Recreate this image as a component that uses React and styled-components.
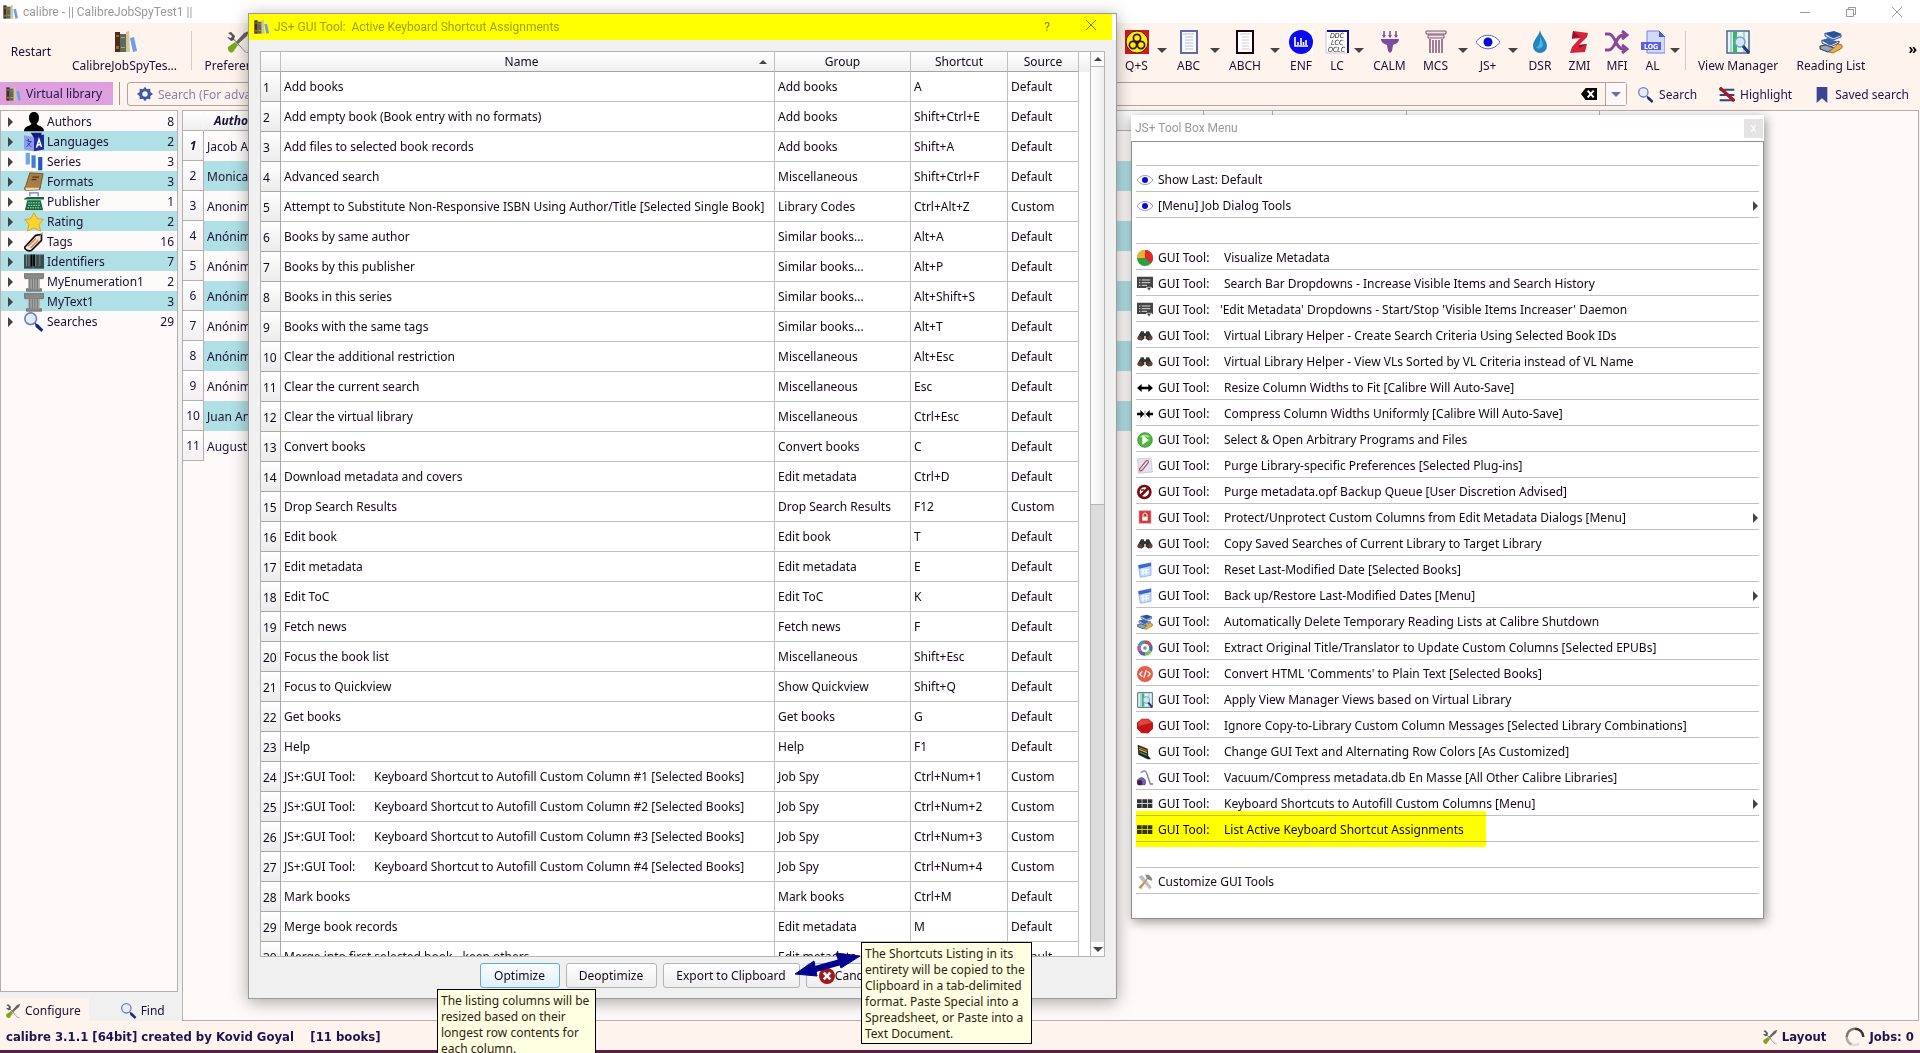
import React from 'react'
import styled, { createGlobalStyle, css } from 'styled-components'

const colors = {
    bar: '#fff3ed',
    panel: '#fffafa',
    stripe: '#b0e0e6',
    window: '#f0f0f0',
    line: '#b4b0b0',
    grid: '#c0c0c0',
    ink: '#1c1033',
    navy: '#1c1450',
    caption: '#999999',
    highlight: '#ffff00',
    tooltip: '#ffffe1',
    plum: '#dda0dd',
}

const uiFont = `'Noto Sans', sans-serif`
const captionFont = `Roboto, 'Noto Sans', sans-serif`
const statusFont = `'DejaVu Sans Condensed', 'Noto Sans', sans-serif`

const GlobalStyle = createGlobalStyle`
    * {
        box-sizing: border-box;
    }
    body {
        margin: 0;
        overflow: hidden;
    }
    button, input {
        font: inherit;
        color: inherit;
        margin: 0;
        padding: 0;
        border: 0;
        background: none;
    }
`

/* ---------- icons ---------- */

const IconBox = styled.svg`
    display: block;
    flex: none;
    width: ${(props) => props.$size}px;
    height: ${(props) => props.$size}px;
`

const drawings = {
    books: (
        <>
            <path d="M2 2h5v20H2z" fill="#4a2c1a" />
            <path d="M3 5h3v2H3zM3 16h3v3H3z" fill="#a0602a" />
            <path d="M7 4h6v18H7z" fill="#5c6a5e" />
            <path d="M8 7h4v1H8zM8 17h4v1H8z" fill="#9aa898" />
            <path d="M13 2l3-1 1 21h-4z" fill="#d8c48e" />
            <path d="M17 8l4-1 3 14-4 1z" fill="#6f9cf0" />
        </>
    ),
    tools: (
        <>
            <path d="M2 3l3-1 4 4-1 3 10 11 3 1 1 2-3-1L8 10l-3 1-4-4 4 1 1-2z" fill="#555" />
            <path d="M18 3l5-2-2 5-9 8-2-2z" fill="#666" />
            <path d="M2 17l7-5 3 3-5 7c-3 2-6-2-5-5z" fill="#7ea61c" />
            <path d="M15 15l6 7" stroke="#eee" strokeWidth="2" />
        </>
    ),
    biohazard: (
        <>
            <path d="M0 0h24v24H0z" fill="#d8151b" />
            <circle cx="12" cy="12" r="11" fill="#ffee12" stroke="#4a1a10" />
            <g fill="none" stroke="#3b1018" strokeWidth="1.700">
                <circle cx="12" cy="8" r="3.600" />
                <circle cx="8" cy="15" r="3.600" />
                <circle cx="16" cy="15" r="3.600" />
            </g>
            <circle cx="12" cy="12.500" r="1.600" fill="#3b1018" />
        </>
    ),
    abc: (
        <>
            <path d="M4 1h16v22H4z" fill="#f8faff" stroke="#6068b0" strokeWidth="2" />
            <path d="M6 4h11M8 7h8M8 10h8M8 13h8M8 16h8M8 19h8" stroke="#b8c4cc" />
        </>
    ),
    abch: (
        <>
            <path d="M4 1h16v22H4z" fill="#fff" stroke="#1a0010" strokeWidth="2" />
            <path d="M7 4h10M9 7h7M9 10h7M9 13h7M9 16h7M9 19h7" stroke="#ccc" />
        </>
    ),
    enf: (
        <>
            <path d="M0 0h24v24H0z" fill="#fff" />
            <circle cx="12" cy="12" r="12" fill="#0b0bf0" />
            <path d="M6 7v9h13M9 15v-3M12 15V8M14.500 15v-3M17 15v-5" stroke="#fff" strokeWidth="1.600" fill="none" />
        </>
    ),
    lc: (
        <>
            <path d="M1 1h22v22H1z" fill="#fff" stroke="#c4c4dc" />
            <path d="M2 1h21v22" stroke="#10108c" strokeWidth="2" fill="none" />
            <g fontSize="7" fontStyle="italic" fontFamily="DejaVu Sans Condensed" fill="#222">
                <text x="5" y="8">DDC</text>
                <text x="6" y="15">LCC</text>
                <text x="3" y="22">OCLC</text>
            </g>
        </>
    ),
    funnel: (
        <>
            <path d="M6 1v6M12 1v6M18 1v6" stroke="#7a4e9c" strokeWidth="1.5" />
            <path d="M4 5h4L6 8zM10 5h4l-2 3zM16 5h4l-2 3zM3 9h18c0 4-4 5-6 6l-1 6-2 2-2-2-1-6c-2-1-6-2-6-6z" fill="#7a4e9c" />
        </>
    ),
    column: (
        <>
            <path d="M2 1h20v3H2zM4 5h16v3H4z" fill="#f4e0ea" stroke="#7b5a70" />
            <path d="M6 9v14M9 10v13M12 10v13M15 10v13M18 9v14" stroke="#8a5f80" strokeWidth="1.6" />
        </>
    ),
    eye: (
        <>
            <path d="M0 12c6-9 18-9 24 0-6 9-18 9-24 0z" fill="#fff" stroke="#5a66b8" />
            <circle cx="12" cy="12" r="4.500" fill="#0b0bd8" />
        </>
    ),
    drop: (
        <>
            <path d="M12 0c1 6 7 10 7 16a7 7 0 0 1-14 0c0-6 6-10 7-16z" fill="#2684bd" />
            <path d="M12 6c1 4 3 6 3 9a4 4 0 0 1-7 2c4 0 4-6 4-11z" fill="#52b0e0" />
        </>
    ),
    zotero: (
        <>
            <path d="M5 1l15 2-1 4-8 8 8-1-2 8-15 1 2-6 8-9-8 1z" fill="#d3243c" />
            <path d="M5 1l7 6-8 1zM11 15l8-1-8 4z" fill="#8e1228" />
        </>
    ),
    shuffle: (
        <path
            d="M0 4h4c6 0 7 15 14 15h2M0 20h4c6 0 7-15 14-15h2M17 1l5 4-5 4M17 15l5 4-5 4"
            fill="none"
            stroke="#87479b"
            strokeWidth="3"
        />
    ),
    log: (
        <>
            <path d="M6 1h12l6 6v16H6z" fill="#cfdcfa" stroke="#6f83e8" />
            <path d="M18 1v6h6z" fill="#4a56d8" />
            <path d="M0 12h20v8H0z" fill="#5a5ee8" />
            <text x="3" y="19" fontSize="7" fontWeight="bold" fontFamily="DejaVu Sans Condensed" fill="#fff">LOG</text>
        </>
    ),
    views: (
        <>
            <path d="M1 1h22v22H1z" fill="#e8f4fa" stroke="#456a86" strokeWidth="1.500" />
            <path d="M5 2v20M18 2v20" stroke="#7aa8c0" />
            <path d="M7 2h4v20H7z" fill="#2fbe58" />
            <circle cx="14" cy="12" r="5" fill="#cfe6f6" stroke="#7b9fc8" strokeWidth="1.500" />
            <path d="M17 16l6 7" stroke="#27347a" strokeWidth="3" />
        </>
    ),
    reading: (
        <>
            <path d="M6 3l9-2 8 3-9 4z" fill="#2b5298" />
            <path d="M6 3v3l8 4 8-3V5l-8 3z" fill="#d8e6f4" stroke="#2b5298" />
            <path d="M3 10l6-2 10 4-8 3z" fill="#3a66ac" />
            <path d="M3 10v3l8 4 9-4v-2l-9 4z" fill="#eef" stroke="#2b4888" />
            <path d="M1 16l6-1 8 3-6 4-8-3z" fill="#8fa8c0" stroke="#334" />
            <path d="M10 22l9-8 4 1v3l-9 5z" fill="#e8b052" stroke="#a87020" />
        </>
    ),
    gear: (
        <>
            <path d="M12 1l3 4 5-1 0 5 4 3-4 3 0 5-5-1-3 4-3-4-5 1 0-5-4-3 4-3 0-5 5 1z" fill="#3b5aa8" />
            <circle cx="12" cy="12" r="4" fill="#fff3ed" />
        </>
    ),
    magnifier: (
        <>
            <circle cx="8" cy="8" r="7" fill="#e4eefa" stroke="#6683c0" strokeWidth="2" />
            <path d="M13 13l4 2 6 6-2 3-7-6z" fill="#1c2880" />
        </>
    ),
    highlightOff: (
        <>
            <path d="M1 4h22M1 12h22M1 20h22" stroke="#264d80" strokeWidth="3" />
            <path d="M1 1l22 20" stroke="#a81820" strokeWidth="5" />
        </>
    ),
    bookmark: <path d="M4 0h16v24l-8-7-8 7z" fill="#3a4594" />,
    clear: (
        <>
            <path d="M7 3h17v18H7l-7-9z" fill="#000" />
            <path d="M10 7l9 10M19 7l-9 10" stroke="#fff" strokeWidth="3" />
        </>
    ),
    person: (
        <path d="M12 0c4 0 6 3 6 7s-1 5-3 7c1 3 9 2 9 9H0c0-7 8-6 9-9-2-2-3-3-3-7s2-7 6-7z" fill="#000" />
    ),
    language: (
        <>
            <path d="M0 4l12 2v17L0 21z" fill="#8f9cf2" />
            <path d="M12 6l12-3v18l-12 2z" fill="#1b2ba0" />
            <path d="M8 1h13v4l-9 2z" fill="#101c78" />
            <path d="M3 10l6 2M5 8l1 4M9 11l-6 7M4 13l5 5" stroke="#2a3788" />
            <path d="M15 19l3-10 3 9M16 16l4-1" stroke="#fff" strokeWidth="1.800" fill="none" />
        </>
    ),
    series: (
        <>
            <path d="M2 1h5v14H2z" fill="#6aa6ec" />
            <path d="M9 4h5v15H9z" fill="#3c7fdc" />
            <path d="M17 6h5v16h-5z" fill="#1e5cc2" />
        </>
    ),
    book: (
        <>
            <path d="M7 1l16 1-4 19-17 1c-2-1-2-3 0-5z" fill="#a87c44" stroke="#6d4d24" />
            <path d="M2 19l16 0 0 2-16 1z" fill="#eadbb8" />
            <path d="M10 6l8 0M9 9l6 0" stroke="#4c3414" strokeWidth="1.500" />
        </>
    ),
    typewriter: (
        <>
            <path d="M7 5V1h10v4" fill="none" stroke="#7476c0" strokeWidth="1.500" />
            <path d="M0 8l4-2h16l4 0v3H0zM4 10h16l3 12H1z" fill="#146a3e" />
            <path d="M5 13h14M5 16h14M4 19h16" stroke="#b9e0c8" strokeWidth="1.200" strokeDasharray="2 1" />
        </>
    ),
    star: <path d="M12 1l4 7 7 1-5 6 2 8-8-4-8 4 2-8-5-6 7-1z" fill="#ffd42e" stroke="#d59a18" />,
    tag: (
        <>
            <path d="M1 18L14 4l7-1 0 7L9 22c-3 2-9-1-8-4z" fill="#f2ded0" stroke="#111" strokeWidth="2" />
            <path d="M5 17l9-9M8 19l9-9" stroke="#d07848" strokeWidth="1.500" />
            <path d="M19 5l4-5" stroke="#999" />
        </>
    ),
    barcode: (
        <>
            <path d="M0 3h24v17H0z" fill="#3b4a4c" />
            <path d="M3 3v14M6 3v14M11 3v17M14 3v14M19 3v14" stroke="#7d9294" />
            <path d="M9 3v14M12 3v14" stroke="#000" strokeWidth="2" />
        </>
    ),
    pillar: (
        <>
            <path d="M0 2h24l-1 6H1zM3 20h18v3H3z" fill="#8a8a8a" stroke="#666" />
            <path d="M5 8h14v12H5z" fill="#a8a8a8" />
            <path d="M7 8v12M10 8v12M13 8v12M16 8v12" stroke="#666" />
        </>
    ),
    pie: (
        <>
            <circle cx="12" cy="12" r="12" fill="#2f9e41" />
            <path d="M12 12V0a12 12 0 0 1 9 20z" fill="#e8262a" />
            <path d="M12 12H0A12 12 0 0 1 12 0z" fill="#f0b030" />
        </>
    ),
    dropdown: (
        <>
            <path d="M0 1h24v17h-3l-3 4-3-4H0z" fill="#444" />
            <path d="M3 6h2M7 6h13M3 10h2M7 10h13M3 14h2M7 14h8" stroke="#ddd" strokeWidth="1.500" />
            <path d="M14 17h8l-4 5z" fill="#444" stroke="#fff" />
        </>
    ),
    binoculars: (
        <>
            <path d="M6 5h4l1 3h2l1-3h4l5 9-5 5-5-3v-4h-2v4l-5 3-5-5z" fill="#333" />
            <circle cx="4" cy="15" r="3.500" fill="#6b3f2c" />
            <circle cx="20" cy="15" r="3.500" fill="#6b3f2c" />
            <path d="M2 23h20" stroke="#e4e4e4" />
        </>
    ),
    widen: <path d="M0 12l7-6v4h10V6l7 6-7 6v-4H7v4z" fill="#000" />,
    narrow: (
        <>
            <path d="M0 10h5V6l6 6-6 6v-4H0zM24 10h-5V6l-6 6 6 6v-4h5z" fill="#000" />
            <path d="M12 7v10" stroke="#666" />
        </>
    ),
    play: (
        <>
            <circle cx="12" cy="12" r="11" fill="#4cb83c" stroke="#2a7a28" />
            <path d="M4 8a9 8 0 0 1 16 0z" fill="#a4e08c" />
            <path d="M8 5l10 7-10 7z" fill="#fff" />
        </>
    ),
    plug: (
        <>
            <path d="M1 1h20l2 20-21 2z" fill="#e4e2f0" stroke="#bbb8cc" />
            <path d="M5 15l8-10c3-3 6 0 3 3l-8 10c-3 3-6 0-3-3z" fill="none" stroke="#a85058" strokeWidth="1.800" />
        </>
    ),
    forbid: (
        <>
            <circle cx="11" cy="12" r="9" fill="#fff" stroke="#7a0c10" strokeWidth="4" />
            <path d="M5 18L17 6" stroke="#7a0c10" strokeWidth="4" />
            <path d="M6 9l5 0" stroke="#222" strokeWidth="2" />
        </>
    ),
    lock: (
        <>
            <path d="M3 1h18v19H3z" fill="#d03a3e" stroke="#e8a0a0" />
            <path d="M8 10h8v6H8z" fill="#fff" />
            <path d="M9 10V7c0-3 6-3 6 0v3" fill="none" stroke="#fff" strokeWidth="1.500" />
        </>
    ),
    calendar: (
        <>
            <path d="M2 5l19-4 0 19-16 3z" fill="#c4dafa" stroke="#7aa0e0" />
            <path d="M2 5l19-4v5L3 10z" fill="#3a68c8" />
            <path d="M6 13l12-2M6 17l12-2M9 10v10M14 10v9" stroke="#fff" strokeWidth="1.500" />
        </>
    ),
    wheel: (
        <g fill="none" strokeWidth="5">
            <path d="M12 3a9 9 0 0 1 8 5" stroke="#d04a4a" />
            <path d="M20 8a9 9 0 0 1 0 8" stroke="#3a68c0" />
            <path d="M20 16a9 9 0 0 1-8 5" stroke="#7ac05a" />
            <path d="M12 21a9 9 0 0 1-8-5" stroke="#5a5ac0" />
            <path d="M4 16a9 9 0 0 1 0-8" stroke="#c050a0" />
            <path d="M4 8a9 9 0 0 1 8-5" stroke="#38a0b0" />
            <circle cx="12" cy="12" r="3" fill="#888" stroke="#ddd" strokeWidth="1" />
        </g>
    ),
    html: (
        <>
            <circle cx="12" cy="12" r="12" fill="#e0604c" />
            <path d="M8 8l-4 4 4 4M16 8l4 4-4 4M14 6l-4 12" fill="none" stroke="#fff" strokeWidth="1.800" />
        </>
    ),
    stop: (
        <>
            <path d="M7 1h10l7 6v9l-7 7H7l-7-7V7z" fill="#c41414" />
            <path d="M7 2h9l6 5-20 5V7z" fill="#e0453c" />
        </>
    ),
    palette: (
        <>
            <path d="M1 1l15 6 1 11 4 5-5 0-14-7z" fill="#222" />
            <path d="M3 4l12 5v2L3 6z" fill="#d8782a" />
            <path d="M3 7l12 5v2L3 9z" fill="#e0c828" />
            <path d="M3 11l12 5v2L4 13z" fill="#2aa080" />
        </>
    ),
    vacuum: (
        <>
            <path d="M6 4c5-5 8-2 9 2l5 15h4" fill="none" stroke="#7c78b0" strokeWidth="2" />
            <path d="M0 17c2-7 12-8 13 1l-1 4H4z" fill="#6b62cc" stroke="#3c3478" />
            <circle cx="4" cy="19" r="4" fill="#5c1830" />
        </>
    ),
    keys: (
        <path d="M0 5h7v6H0zM8 5h7v6H8zM16 5h7v6h-7zM0 12h7v6H0zM8 12h7v6H8zM16 12h7v6h-7z" fill="#333" />
    ),
    hammer: (
        <>
            <path d="M2 4l6-2 14 18-3 3L6 9z" fill="#b8bcc4" />
            <path d="M14 2l7 3 1 5-6-2L6 23l-4-3L14 8z" fill="#c09a58" />
            <path d="M12 1l6 0 5 6-1 3-6-3z" fill="#888" />
        </>
    ),
    cancel: (
        <>
            <circle cx="12" cy="12" r="12" fill="#a01818" />
            <path d="M7 7l10 10M17 7L7 17" stroke="#fff" strokeWidth="4" />
        </>
    ),
    spinner: (
        <g fill="none" strokeWidth="3">
            <path d="M8 21a10 10 0 0 1-6-9" stroke="#aaa" />
            <path d="M2 12A10 10 0 0 1 12 2" stroke="#777" />
            <path d="M12 2a10 10 0 0 1 10 10" stroke="#333" />
            <path d="M8 21a10 10 0 0 0 9-1" stroke="#ddd" />
        </g>
    ),
}

function Icon({ name, size = 24 }) {
    return (
        <IconBox viewBox="0 0 24 24" $size={size} aria-hidden="true">
            {drawings[name]}
        </IconBox>
    )
}

const Triangle = styled.span`
    flex: none;
    width: 0;
    height: 0;
    border: 5px solid transparent;
    ${(props) =>
        props.$to === 'down' &&
        css`
            border-top-color: ${props.$color || '#444'};
            border-bottom: 0;
        `}
    ${(props) =>
        props.$to === 'up' &&
        css`
            border-width: 4px;
            border-bottom-color: #444;
            border-top: 0;
        `}
    ${(props) =>
        props.$to === 'right' &&
        css`
            border-left-color: #444;
            border-right: 0;
        `}
`

/* ---------- main window ---------- */

const Desktop = styled.div`
    position: relative;
    display: flex;
    flex-direction: column;
    height: 100vh;
    overflow: hidden;
    background: ${colors.bar};
    font-family: ${uiFont};
    font-size: 12px;
    line-height: 16px;
    color: ${colors.ink};
    white-space: pre;
`

const TitleBar = styled.header`
    flex: none;
    display: flex;
    align-items: center;
    height: 23px;
    padding-left: 2px;
    gap: 5px;
    background: #fff;
    color: ${colors.caption};
    font-family: ${captionFont};
`

const WindowButtons = styled.div`
    display: flex;
    margin-left: auto;
`

const WindowButton = styled.button`
    display: flex;
    justify-content: center;
    width: ${(props) => props.$width || 46}px;
    color: ${colors.caption};

    svg {
        width: 12px;
        height: 12px;
        fill: none;
        stroke: currentColor;
    }
`

const ToolBar = styled.nav`
    flex: none;
    display: flex;
    justify-content: space-between;
    height: 59px;
`

const ToolGroup = styled.div`
    display: flex;
`

const ToolButton = styled.button`
    display: flex;
    flex-direction: column;
    align-items: center;
    justify-content: center;
    gap: 4px;
    width: ${(props) => props.$width}px;
    height: 57px;
`

const DropButton = styled.button`
    display: flex;
    align-items: center;
    justify-content: center;
    width: 12px;
    height: 54px;
`

const ToolDivider = styled.span`
    width: 1px;
    height: 39px;
    margin: 8px 4px;
    background: #d0cccc;
`

const More = styled.button`
    width: 44px;
    height: 52px;
    padding-right: 3px;
    text-align: right;
    font-weight: bold;
    font-size: 14px;
    color: #000;
`

const SearchRow = styled.div`
    flex: none;
    display: flex;
    height: 28px;
    color: ${colors.navy};
`

const VirtualLibrary = styled.button`
    display: flex;
    align-items: center;
    gap: 5px;
    width: 113px;
    height: 23px;
    padding: 1px 0 0 5px;
    background: ${colors.plum};
`

const Splitter = styled.span`
    width: 1px;
    height: 23px;
    margin: 0 7px 0 6px;
    background: #999;
`

const SearchBox = styled.div`
    flex: 1;
    display: flex;
    align-items: center;
    height: 24px;
    padding-left: 9px;
    gap: 5px;
    border: 1px solid #aaa4a4;
    border-radius: 3px;

    input {
        flex: 1;
        min-width: 0;
        padding-top: 1px;
        outline: 0;
    }
    input::placeholder {
        color: #8c80a8;
        opacity: 1;
    }
`

const SearchDrop = styled.button`
    display: flex;
    align-items: center;
    justify-content: center;
    width: 21px;
    height: 22px;
    margin-left: 3px;
    border-left: 1px solid #aaa4a4;
    background: #fff8f6;
`

const SearchAction = styled.button`
    display: flex;
    align-items: center;
    gap: 5px;
    height: 24px;
    padding-top: 1px;
    margin-left: ${(props) => props.$space}px;

    &:last-child {
        margin-right: 11px;
    }
`

const Body = styled.main`
    flex: 1;
    display: flex;
    min-height: 0;
    background: ${colors.window};
`

const SideBar = styled.aside`
    flex: none;
    display: flex;
    flex-direction: column;
    width: 178px;
    margin-right: 4px;
`

const Tree = styled.ul`
    flex: 1;
    margin: 0 0 6px;
    padding: 0;
    list-style: none;
    border: 1px solid ${colors.line};
    background: ${colors.panel};
`

const TreeRow = styled.li`
    display: flex;
    align-items: center;
    height: 20px;
    padding: 1px 3px 0 7px;
    gap: 3px;

    &:nth-child(even) {
        background: ${colors.stripe};
    }
    ${Triangle} {
        margin-right: 8px;
    }
`

const Count = styled.span`
    margin-left: auto;
`

const SideTabs = styled.div`
    display: flex;
    height: 23px;
`

const SideTab = styled.button`
    display: flex;
    align-items: center;
    gap: 4px;
    width: 91px;
    padding: 2px 0 0 ${(props) => (props.$active ? 5 : 32)}px;
    background: ${(props) => (props.$active ? colors.bar : 'transparent')};
`

const Library = styled.section`
    flex: 1;
    margin-right: 1px;
    border: 1px solid ${colors.line};
    background: ${colors.panel};
    overflow: hidden;
`

const BookTable = styled.table`
    width: 1417px;
    table-layout: fixed;
    border-collapse: separate;
    border-spacing: 0;

    th, td {
        padding: 1px 3px 0;
        text-align: left;
        font-weight: normal;
    }
    thead th {
        height: 20px;
        padding-left: 10px;
        font-weight: bold;
        font-style: italic;
        border: solid ${colors.line};
        border-width: 0 1px 1px 0;
        background: linear-gradient(#fff, #efefef);
    }
    thead th:first-child {
        border-right-color: #f8f8f8;
    }
    tbody th {
        height: 30px;
        padding: 1px 0 0;
        text-align: center;
        border: solid ${colors.line};
        border-width: 0 1px 1px 0;
        background: linear-gradient(#fff, #f2f0f0);
    }
    tbody tr:first-child th {
        font-weight: bold;
        font-style: italic;
    }
    tbody tr:nth-child(even) td {
        background: ${colors.stripe};
    }
`

const StatusBar = styled.footer`
    flex: none;
    display: flex;
    align-items: center;
    height: 29px;
    padding: 2px 6px 0;
    font-family: ${statusFont};
    font-size: 13px;
    font-weight: bold;
    color: ${colors.navy};
`

const StatusButton = styled.button`
    display: flex;
    align-items: center;
    gap: 4px;
    margin-left: ${(props) => (props.$push ? 'auto' : '19px')};
`

const TaskBarEdge = styled.div`
    flex: none;
    height: 3px;
    background: #5a2144;
`

/* ---------- shortcuts dialog ---------- */

const Dialog = styled.section`
    position: absolute;
    top: 13px;
    bottom: 54px;
    left: 248px;
    display: flex;
    flex-direction: column;
    width: 869px;
    border: 1px solid #9a9a9a;
    background: ${colors.window};
    box-shadow: 0 3px 16px rgba(0, 0, 0, 0.35);
    color: #120818;
`

const DialogTitle = styled.header`
    flex: none;
    display: flex;
    align-items: center;
    gap: 5px;
    height: 26px;
    padding-left: 4px;
    border-right: 4px solid #fff;
    background: ${colors.highlight};
    color: #a0a000;
    font-family: ${captionFont};

    button {
        color: #808000;
    }
`

const Grid = styled.div`
    flex: 1;
    display: flex;
    min-height: 0;
    margin: 11px 11px 6px;
    border: 1px solid #b4b4b4;
    background: #fff;
`

const GridView = styled.div`
    flex: 1;
    overflow: hidden;
    background: linear-gradient(#fff, #efefef) 0 0 / 100% 20px no-repeat;
`

const ShortcutTable = styled.table`
    width: 818px;
    table-layout: fixed;
    border-collapse: separate;
    border-spacing: 0;

    th, td {
        padding: 0 3px;
        text-align: left;
        font-weight: normal;
        border: solid ${colors.grid};
        border-width: 0 1px 1px 0;
    }
    thead th {
        height: 20px;
        padding-top: 1px;
        text-align: center;
        border-bottom-color: #a4a4a4;
    }
    tbody th {
        height: 30px;
        padding: 2px 0 0 2px;
        border-color: #a8a8a8;
        background: linear-gradient(#fff, #ececec);
    }
`

const SortHead = styled.span`
    display: grid;
    grid-template-columns: 1fr 12px;
    align-items: center;
`

const ScrollBar = styled.div`
    display: flex;
    flex-direction: column;
    width: 14px;
    border-left: 1px solid #b4b4b4;
    background: #dcdcdc;
`

const ScrollButton = styled.button`
    display: flex;
    align-items: center;
    justify-content: center;
    height: 14px;
    background: #fafafa;
`

const ScrollHandle = styled.div`
    flex: 1;
    border: solid #b4b4b4;
    border-width: 1px 0;
    background: linear-gradient(to right, #fff, #ededed);
`

const ScrollTrack = styled.div`
    flex: 1;
`

const DialogButtons = styled.footer`
    flex: none;
    display: flex;
    justify-content: center;
    gap: 6px;
    height: 35px;
`

const PushButton = styled.button`
    display: flex;
    align-items: center;
    justify-content: center;
    width: ${(props) => props.$width}px;
    height: 25px;
    border: 1px solid ${(props) => (props.$default ? '#5cacd8' : '#b4b4b4')};
    border-radius: 3px;
    background: ${(props) =>
        props.$default ? 'linear-gradient(#fafdff, #e0f0f8)' : 'linear-gradient(#fefefe, #eeeeee)'};
`

/* ---------- tool box menu ---------- */

const ToolBox = styled.section`
    position: absolute;
    top: 115px;
    left: 1131px;
    width: 633px;
    background: #fff;
    box-shadow: 2px 3px 10px rgba(0, 0, 0, 0.4);
    color: #120818;
`

const ToolBoxTitle = styled.header`
    display: flex;
    align-items: center;
    justify-content: space-between;
    height: 26px;
    padding: 0 1px 0 4px;
    color: ${colors.caption};
    font-family: ${captionFont};

    button {
        width: 19px;
        height: 19px;
        line-height: 16px;
        background: #e4e4e4;
        color: #fff;
    }
`

const MenuList = styled.ul`
    margin: 0;
    padding: 0 4px 24px;
    list-style: none;
    border: 1px solid #909090;
`

const MenuRow = styled.li`
    position: relative;
    height: ${(props) => (props.$first ? 24 : 26)}px;
    border-bottom: 1px solid ${colors.grid};
`

const MenuButton = styled.button`
    display: flex;
    align-items: center;
    gap: 5px;
    width: 100%;
    height: 27px;
    padding: 0 1px;

    ${Triangle} {
        margin-left: auto;
    }
`

const Lead = styled.span`
    display: inline-block;
    width: ${(props) => (props.$tight ? 62 : 66)}px;
    text-align: left;
`

const Marker = styled.span`
    position: absolute;
    top: -5px;
    left: 0;
    width: 350px;
    height: 36px;
    background: ${colors.highlight};
    mix-blend-mode: multiply;
    pointer-events: none;
`

const Tooltip = styled.div`
    position: absolute;
    top: ${(props) => props.$top}px;
    left: ${(props) => props.$left}px;
    width: ${(props) => props.$width}px;
    padding: 3px 3px 1px;
    border: 1px solid #000;
    background: ${colors.tooltip};
    color: #2c1c14;
`

const Pointer = styled.svg`
    position: absolute;
    top: 952px;
    left: 794px;
    width: 68px;
    height: 26px;
    fill: #00008c;
    stroke: #00008c;
`

const tools = [
    { icon: 'biohazard', label: 'Q+S', width: 39, drop: true },
    { icon: 'abc', label: 'ABC', width: 41, drop: true },
    { icon: 'abch', label: 'ABCH', width: 48, drop: true },
    { icon: 'enf', label: 'ENF', width: 40 },
    { icon: 'lc', label: 'LC', width: 32, drop: true },
    { icon: 'funnel', label: 'CALM', width: 49 },
    { icon: 'column', label: 'MCS', width: 43, drop: true },
    { icon: 'eye', label: 'JS+', width: 38, drop: true },
    { icon: 'drop', label: 'DSR', width: 42 },
    { icon: 'zotero', label: 'ZMI', width: 37 },
    { icon: 'shuffle', label: 'MFI', width: 38 },
    { icon: 'log', label: 'AL', width: 33, drop: true },
]

const categories = [
    ['person', 'Authors', 8],
    ['language', 'Languages', 2],
    ['series', 'Series', 3],
    ['book', 'Formats', 3],
    ['typewriter', 'Publisher', 1],
    ['star', 'Rating', 2],
    ['tag', 'Tags', 16],
    ['barcode', 'Identifiers', 7],
    ['pillar', 'MyEnumeration1', 2],
    ['pillar', 'MyText1', 3],
    ['magnifier', 'Searches', 29],
]

const authors = [
    'Jacob A', 'Monica', 'Anonim', 'Anónim', 'Anónim', 'Anónim',
    'Anónim', 'Anónim', 'Anónim', 'Juan An', 'August',
]

const shortcuts = [
    ['Add books', 'Add books', 'A', 'Default'],
    ['Add empty book (Book entry with no formats)', 'Add books', 'Shift+Ctrl+E', 'Default'],
    ['Add files to selected book records', 'Add books', 'Shift+A', 'Default'],
    ['Advanced search', 'Miscellaneous', 'Shift+Ctrl+F', 'Default'],
    ['Attempt to Substitute Non-Responsive ISBN Using Author/Title [Selected Single Book]', 'Library Codes', 'Ctrl+Alt+Z', 'Custom'],
    ['Books by same author', 'Similar books...', 'Alt+A', 'Default'],
    ['Books by this publisher', 'Similar books...', 'Alt+P', 'Default'],
    ['Books in this series', 'Similar books...', 'Alt+Shift+S', 'Default'],
    ['Books with the same tags', 'Similar books...', 'Alt+T', 'Default'],
    ['Clear the additional restriction', 'Miscellaneous', 'Alt+Esc', 'Default'],
    ['Clear the current search', 'Miscellaneous', 'Esc', 'Default'],
    ['Clear the virtual library', 'Miscellaneous', 'Ctrl+Esc', 'Default'],
    ['Convert books', 'Convert books', 'C', 'Default'],
    ['Download metadata and covers', 'Edit metadata', 'Ctrl+D', 'Default'],
    ['Drop Search Results', 'Drop Search Results', 'F12', 'Custom'],
    ['Edit book', 'Edit book', 'T', 'Default'],
    ['Edit metadata', 'Edit metadata', 'E', 'Default'],
    ['Edit ToC', 'Edit ToC', 'K', 'Default'],
    ['Fetch news', 'Fetch news', 'F', 'Default'],
    ['Focus the book list', 'Miscellaneous', 'Shift+Esc', 'Default'],
    ['Focus to Quickview', 'Show Quickview', 'Shift+Q', 'Default'],
    ['Get books', 'Get books', 'G', 'Default'],
    ['Help', 'Help', 'F1', 'Default'],
    ['JS+:GUI Tool:      Keyboard Shortcut to Autofill Custom Column #1 [Selected Books]', 'Job Spy', 'Ctrl+Num+1', 'Custom'],
    ['JS+:GUI Tool:      Keyboard Shortcut to Autofill Custom Column #2 [Selected Books]', 'Job Spy', 'Ctrl+Num+2', 'Custom'],
    ['JS+:GUI Tool:      Keyboard Shortcut to Autofill Custom Column #3 [Selected Books]', 'Job Spy', 'Ctrl+Num+3', 'Custom'],
    ['JS+:GUI Tool:      Keyboard Shortcut to Autofill Custom Column #4 [Selected Books]', 'Job Spy', 'Ctrl+Num+4', 'Custom'],
    ['Mark books', 'Mark books', 'Ctrl+M', 'Default'],
    ['Merge book records', 'Edit metadata', 'M', 'Default'],
    ['Merge into first selected book - keep others', 'Edit metadata', 'Alt+M', 'Default'],
]

const guiTools = [
    ['pie', 'Visualize Metadata'],
    ['dropdown', 'Search Bar Dropdowns - Increase Visible Items and Search History'],
    ['dropdown', "'Edit Metadata' Dropdowns - Start/Stop 'Visible Items Increaser' Daemon"],
    ['binoculars', 'Virtual Library Helper - Create Search Criteria Using Selected Book IDs'],
    ['binoculars', 'Virtual Library Helper - View VLs Sorted by VL Criteria instead of VL Name'],
    ['widen', 'Resize Column Widths to Fit [Calibre Will Auto-Save]'],
    ['narrow', 'Compress Column Widths Uniformly [Calibre Will Auto-Save]'],
    ['play', 'Select & Open Arbitrary Programs and Files'],
    ['plug', 'Purge Library-specific Preferences [Selected Plug-ins]'],
    ['forbid', 'Purge metadata.opf Backup Queue [User Discretion Advised]'],
    ['lock', 'Protect/Unprotect Custom Columns from Edit Metadata Dialogs [Menu]', true],
    ['binoculars', 'Copy Saved Searches of Current Library to Target Library'],
    ['calendar', 'Reset Last-Modified Date [Selected Books]'],
    ['calendar', 'Back up/Restore Last-Modified Dates [Menu]', true],
    ['reading', 'Automatically Delete Temporary Reading Lists at Calibre Shutdown'],
    ['wheel', 'Extract Original Title/Translator to Update Custom Columns [Selected EPUBs]'],
    ['html', "Convert HTML 'Comments' to Plain Text [Selected Books]"],
    ['views', 'Apply View Manager Views based on Virtual Library'],
    ['stop', 'Ignore Copy-to-Library Custom Column Messages [Selected Library Combinations]'],
    ['palette', 'Change GUI Text and Alternating Row Colors [As Customized]'],
    ['vacuum', 'Vacuum/Compress metadata.db En Masse [All Other Calibre Libraries]'],
    ['keys', 'Keyboard Shortcuts to Autofill Custom Columns [Menu]', true],
    ['keys', 'List Active Keyboard Shortcut Assignments'],
]

function MenuItem({ icon, lead, label, submenu, marked }) {
    return (
        <MenuRow>
            <MenuButton>
                <Icon name={icon} size={16} />
                <span>
                    {lead && <Lead $tight={label.startsWith("'")}>GUI Tool:</Lead>}
                    {label}
                </span>
                {submenu && <Triangle $to="right" />}
            </MenuButton>
            {marked && <Marker />}
        </MenuRow>
    )
}

function MainToolBar() {
    return (
        <ToolBar>
            <ToolGroup>
                <ToolButton $width={62}>Restart</ToolButton>
                <ToolButton $width={125}>
                    <Icon name="books" />
                    CalibreJobSpyTes...
                </ToolButton>
                <ToolDivider />
                <ToolButton $width={84}>
                    <Icon name="tools" />
                    Preferences
                </ToolButton>
            </ToolGroup>
            <ToolGroup>
                {tools.map((tool) => (
                    <React.Fragment key={tool.label}>
                        <ToolButton $width={tool.width}>
                            <Icon name={tool.icon} />
                            {tool.label}
                        </ToolButton>
                        {tool.drop && (
                            <DropButton aria-label={`${tool.label} menu`}>
                                <Triangle $to="down" />
                            </DropButton>
                        )}
                    </React.Fragment>
                ))}
                <ToolDivider />
                <ToolButton $width={96}>
                    <Icon name="views" />
                    View Manager
                </ToolButton>
                <ToolButton $width={90}>
                    <Icon name="reading" />
                    Reading List
                </ToolButton>
                <More aria-label="More tools">»</More>
            </ToolGroup>
        </ToolBar>
    )
}

function MainSearch() {
    return (
        <SearchRow>
            <VirtualLibrary>
                <Icon name="books" size={16} />
                Virtual library
            </VirtualLibrary>
            <Splitter />
            <SearchBox>
                <Icon name="gear" size={16} />
                <input aria-label="Search" placeholder="Search (For advanced search click the gear icon to the left)" />
                <Icon name="clear" size={16} />
                <SearchDrop aria-label="Search history">
                    <Triangle $to="down" $color="#6a70a8" />
                </SearchDrop>
            </SearchBox>
            <SearchAction $space={11}>
                <Icon name="magnifier" size={16} />
                Search
            </SearchAction>
            <SearchAction $space={22}>
                <Icon name="highlightOff" size={16} />
                Highlight
            </SearchAction>
            <SearchAction $space={22}>
                <Icon name="bookmark" size={16} />
                Saved search
            </SearchAction>
        </SearchRow>
    )
}

function SidePanel() {
    return (
        <SideBar>
            <Tree>
                {categories.map(([icon, name, count]) => (
                    <TreeRow key={name}>
                        <Triangle $to="right" />
                        <Icon name={icon} size={20} />
                        {name}
                        <Count>{count}</Count>
                    </TreeRow>
                ))}
            </Tree>
            <SideTabs>
                <SideTab $active>
                    <Icon name="tools" size={16} />
                    Configure
                </SideTab>
                <SideTab>
                    <Icon name="magnifier" size={16} />
                    Find
                </SideTab>
            </SideTabs>
        </SideBar>
    )
}

function BookList() {
    return (
        <Library>
            <BookTable>
                <colgroup>
                    <col width="21" />
                    <col width="90" />
                    <col width="910" />
                    <col width="69" />
                    <col width="134" />
                    <col />
                </colgroup>
                <thead>
                    <tr>
                        <th />
                        <th>Authors</th>
                        <th />
                        <th />
                        <th />
                        <th />
                    </tr>
                </thead>
                <tbody>
                    {authors.map((author, i) => (
                        <tr key={i}>
                            <th>{i + 1}</th>
                            <td>{author}</td>
                            <td />
                            <td />
                            <td />
                            <td />
                        </tr>
                    ))}
                </tbody>
            </BookTable>
        </Library>
    )
}

function ShortcutsDialog() {
    return (
        <Dialog>
            <DialogTitle>
                <Icon name="books" size={16} />
                <span>JS+ GUI Tool:  Active Keyboard Shortcut Assignments</span>
                <WindowButtons>
                    <WindowButton aria-label="Help">?</WindowButton>
                    <WindowButton aria-label="Close" $width={42}>
                        <svg viewBox="0 0 12 12">
                            <path d="M1 1l10 10M11 1L1 11" />
                        </svg>
                    </WindowButton>
                </WindowButtons>
            </DialogTitle>
            <Grid>
                <GridView>
                    <ShortcutTable>
                        <colgroup>
                            <col width="20" />
                            <col width="494" />
                            <col width="136" />
                            <col width="97" />
                            <col width="71" />
                        </colgroup>
                        <thead>
                            <tr>
                                <th />
                                <th>
                                    <SortHead>
                                        Name
                                        <Triangle $to="up" />
                                    </SortHead>
                                </th>
                                <th>Group</th>
                                <th>Shortcut</th>
                                <th>Source</th>
                            </tr>
                        </thead>
                        <tbody>
                            {shortcuts.map((row, i) => (
                                <tr key={i}>
                                    <th>{i + 1}</th>
                                    {row.map((cell, j) => (
                                        <td key={j}>{cell}</td>
                                    ))}
                                </tr>
                            ))}
                        </tbody>
                    </ShortcutTable>
                </GridView>
                <ScrollBar>
                    <ScrollButton aria-label="Scroll up">
                        <Triangle $to="up" />
                    </ScrollButton>
                    <ScrollHandle />
                    <ScrollTrack />
                    <ScrollButton aria-label="Scroll down">
                        <Triangle $to="down" />
                    </ScrollButton>
                </ScrollBar>
            </Grid>
            <DialogButtons>
                <PushButton $width={80} $default>Optimize</PushButton>
                <PushButton $width={91}>Deoptimize</PushButton>
                <PushButton $width={137}>Export to Clipboard</PushButton>
                <PushButton $width={80}>
                    <Icon name="cancel" size={16} />
                    Cancel
                </PushButton>
            </DialogButtons>
        </Dialog>
    )
}

function ToolBoxMenu() {
    return (
        <ToolBox>
            <ToolBoxTitle>
                JS+ Tool Box Menu
                <button aria-label="Close">x</button>
            </ToolBoxTitle>
            <MenuList>
                <MenuRow $first />
                <MenuItem icon="eye" label="Show Last: Default" />
                <MenuItem icon="eye" label="[Menu] Job Dialog Tools" submenu />
                <MenuRow />
                {guiTools.map(([icon, label, submenu], i) => (
                    <MenuItem
                        key={label}
                        icon={icon}
                        lead
                        label={label}
                        submenu={submenu}
                        marked={i === guiTools.length - 1}
                    />
                ))}
                <MenuRow />
                <MenuItem icon="hammer" label="Customize GUI Tools" />
            </MenuList>
        </ToolBox>
    )
}

function App() {
    return (
        <>
            <GlobalStyle />
            <Desktop>
                <TitleBar>
                    <Icon name="books" size={16} />
                    calibre - || CalibreJobSpyTest1 ||
                    <WindowButtons>
                        <WindowButton aria-label="Minimize">
                            <svg viewBox="0 0 12 12">
                                <path d="M1 6.500h10" />
                            </svg>
                        </WindowButton>
                        <WindowButton aria-label="Restore">
                            <svg viewBox="0 0 12 12">
                                <path d="M1.500 3.500h7v7h-7zM3.500 3V1.500h7v7H9" />
                            </svg>
                        </WindowButton>
                        <WindowButton aria-label="Close">
                            <svg viewBox="0 0 12 12">
                                <path d="M1 1l10 10M11 1L1 11" />
                            </svg>
                        </WindowButton>
                    </WindowButtons>
                </TitleBar>
                <MainToolBar />
                <MainSearch />
                <Body>
                    <SidePanel />
                    <BookList />
                </Body>
                <StatusBar>
                    calibre 3.1.1 [64bit] created by Kovid Goyal    [11 books]
                    <StatusButton $push>
                        <Icon name="tools" size={16} />
                        Layout
                    </StatusButton>
                    <StatusButton>
                        <Icon name="spinner" size={20} />
                        Jobs: 0
                    </StatusButton>
                </StatusBar>
                <TaskBarEdge />
                <ShortcutsDialog />
                <ToolBoxMenu />
                <Tooltip $top={989} $left={437} $width={159}>
                    {'The listing columns will be\nresized based on their\nlongest row contents for\neach column.'}
                </Tooltip>
                <Pointer viewBox="0 0 68 26">
                    <path d="M14 19L54 8" strokeWidth="6" />
                    <path d="M1 22l19-13 3 15zM66 4L42 1l5 15z" />
                </Pointer>
                <Tooltip $top={942} $left={861} $width={171}>
                    {'The Shortcuts Listing in its\nentirety will be copied to the\nClipboard in a tab-delimited\nformat. Paste Special into a\nSpreadsheet, or Paste into a\nText Document.'}
                </Tooltip>
            </Desktop>
        </>
    )
}

export default App
